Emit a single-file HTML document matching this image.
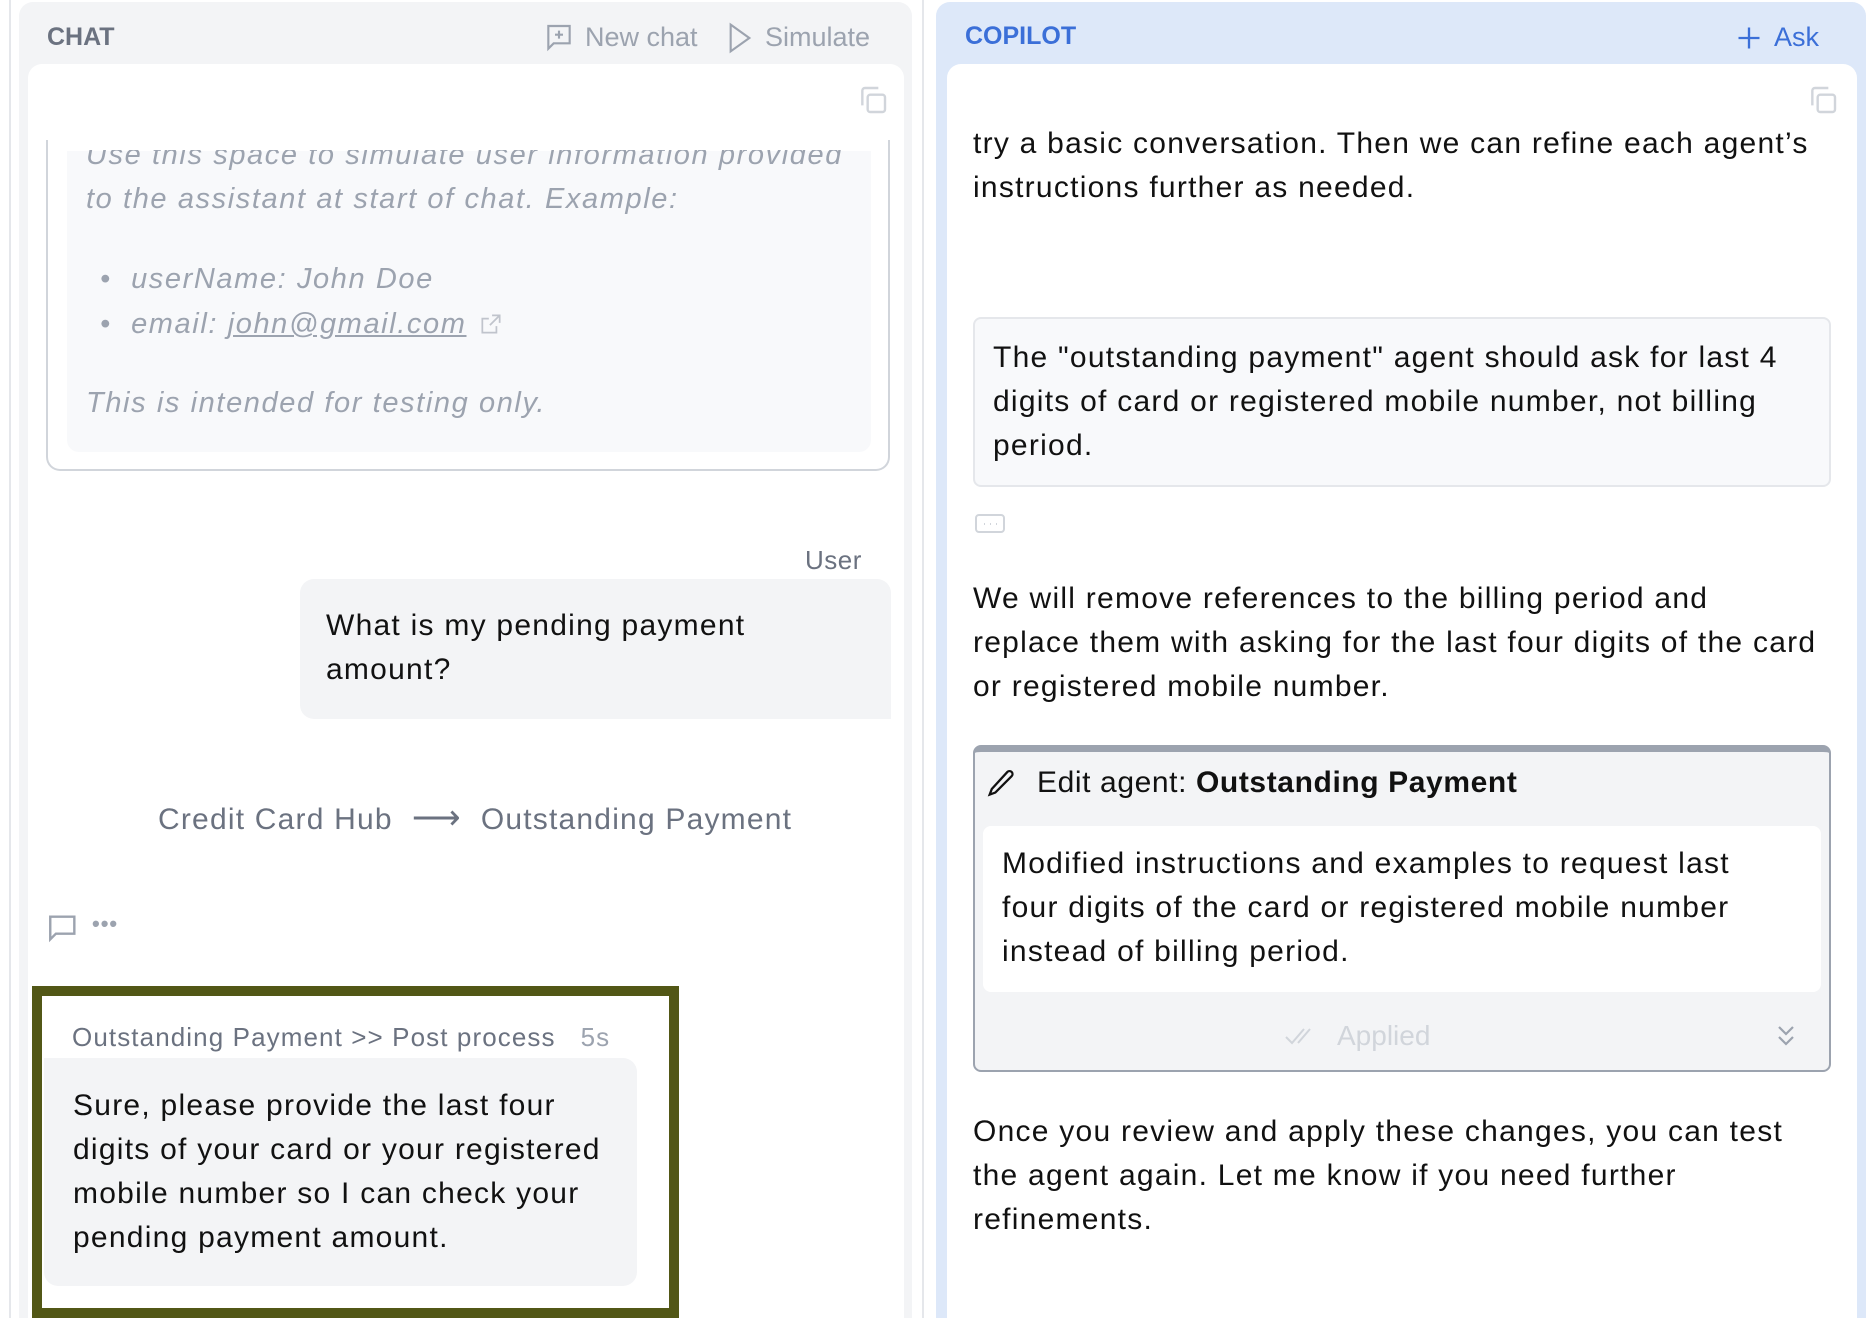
<!DOCTYPE html>
<html><head><meta charset="utf-8"><style>
*{margin:0;padding:0;box-sizing:border-box}
html,body{width:1874px;height:1318px;overflow:hidden}
body{background:#fff;font-family:"Liberation Sans",sans-serif;position:relative;color:#111}
.a{position:absolute;white-space:nowrap}
.t{font-size:30px;line-height:44px;letter-spacing:1.25px}
.g{color:#9ca3af;font-style:italic;font-size:29px;letter-spacing:1.6px}
</style></head><body>
<div class="a" style="left:9px;top:0;width:2px;height:1318px;background:#e5e7eb"></div>
<!-- left panel -->
<div class="a" style="left:19px;top:2px;width:893px;height:1316px;background:#f3f4f6;border-radius:14px 14px 0 0"></div>
<div class="a" style="left:922px;top:0;width:2px;height:1318px;background:#e5e7eb"></div>
<div class="a" style="left:47px;top:23px;font-size:25px;font-weight:bold;color:#6b7280">CHAT</div>
<svg class="a" style="left:543px;top:22px" width="32" height="32" viewBox="0 0 24 24" fill="none" stroke="#9ca3af" stroke-width="1.6"><path d="M4 3h16v13H8l-4 4z"/><path d="M12 6.5v6M9 9.5h6"/></svg>
<div class="a" style="left:585px;top:22px;font-size:27px;color:#9ca3af">New chat</div>
<svg class="a" style="left:726px;top:22px" width="28" height="32" viewBox="0 0 20 24" fill="none" stroke="#9ca3af" stroke-width="1.6"><path d="M3 2l14 10-14 10z"/></svg>
<div class="a" style="left:765px;top:22px;font-size:27px;color:#9ca3af">Simulate</div>
<div class="a" style="left:28px;top:64px;width:876px;height:1254px;background:#fff;border-radius:14px 14px 0 0"></div>
<svg class="a" style="left:857px;top:84px" width="32" height="32" viewBox="0 0 24 24" fill="none" stroke="#d1d5db" stroke-width="1.8"><rect x="8" y="8" width="13" height="13" rx="2"/><path d="M4 16V5a2 2 0 0 1 2-2h10"/></svg>
<!-- system box -->
<div class="a" style="left:46px;top:140px;width:844px;height:331px;border:2px solid #d1d5db;border-top:none;border-radius:0 0 14px 14px;overflow:hidden">
 <div style="position:absolute;left:19px;top:0;width:804px;height:312px;background:#f8f9fb;border-radius:0 0 12px 12px"></div>
</div>
<div class="a" style="left:66px;top:137px;width:810px;height:14px;background:#fff"></div>
<div class="a g" style="left:86px;top:133px;line-height:44px;clip-path:inset(17px 0 0 0)">Use this space to simulate user information provided</div>
<div class="a g" style="left:86px;top:177px;line-height:44px">to the assistant at start of chat. Example:</div>
<div class="a g" style="left:100px;top:257px;line-height:44px">•&nbsp;&nbsp;userName: John Doe</div>
<div class="a g" style="left:100px;top:302px;line-height:44px">•&nbsp;&nbsp;email: <span style="text-decoration:underline">john@gmail.com</span></div>
<svg class="a" style="left:478px;top:311px" width="26" height="26" viewBox="0 0 24 24" fill="none" stroke="#c0c4cc" stroke-width="1.6"><path d="M13 4h7v7M20 4l-9 9M17 14v6H4V7h6"/></svg>
<div class="a g" style="left:86px;top:381px;line-height:44px">This is intended for testing only.</div>
<!-- user -->
<div class="a" style="left:805px;top:545px;font-size:26px;color:#6b7280;letter-spacing:0.5px">User</div>
<div class="a" style="left:300px;top:579px;width:591px;height:140px;background:#f3f4f6;border-radius:14px 14px 0 14px"></div>
<div class="a t" style="left:326px;top:604px">What is my pending payment<br>amount?</div>
<div class="a" style="left:158px;top:798px;font-size:30px;color:#6b7280;letter-spacing:1.2px">Credit Card Hub&nbsp;&nbsp;<span style="font-size:34px">⟶</span>&nbsp;&nbsp;Outstanding Payment</div>
<svg class="a" style="left:46px;top:911px" width="34" height="34" viewBox="0 0 24 24" fill="none" stroke="#9ca3af" stroke-width="1.7"><path d="M3 4h17v12H7l-4 4z"/></svg>
<div class="a" style="left:92px;top:911px;font-size:22px;color:#9ca3af;letter-spacing:1px;font-weight:bold">•••</div>
<!-- highlighted -->
<div class="a" style="left:32px;top:986px;width:647px;height:332px;border:10px solid #525716;background:#fff"></div>
<div class="a" style="left:72px;top:1022px;font-size:26px;color:#6b7280;letter-spacing:1.1px">Outstanding Payment &gt;&gt; Post process&nbsp;&nbsp;&nbsp;<span style="color:#9ca3af">5s</span></div>
<div class="a" style="left:44px;top:1058px;width:593px;height:228px;background:#f3f4f6;border-radius:0 14px 14px 14px"></div>
<div class="a t" style="left:73px;top:1084px">Sure, please provide the last four<br>digits of your card or your registered<br>mobile number so I can check your<br>pending payment amount.</div>
<!-- right panel -->
<div class="a" style="left:936px;top:2px;width:930px;height:1316px;background:#dde8f9;border-radius:14px 14px 0 0"></div>
<div class="a" style="left:965px;top:22px;font-size:25px;font-weight:bold;color:#3b6fd8">COPILOT</div>
<svg class="a" style="left:1735px;top:24px" width="28" height="28" viewBox="0 0 24 24" fill="none" stroke="#3b6fd8" stroke-width="2"><path d="M12 3v18M3 12h18"/></svg>
<div class="a" style="left:1774px;top:22px;font-size:27px;color:#3b6fd8">Ask</div>
<div class="a" style="left:947px;top:64px;width:910px;height:1254px;background:#fff;border-radius:14px 14px 0 0"></div>
<svg class="a" style="left:1807px;top:84px" width="32" height="32" viewBox="0 0 24 24" fill="none" stroke="#d1d5db" stroke-width="1.8"><rect x="8" y="8" width="13" height="13" rx="2"/><path d="M4 16V5a2 2 0 0 1 2-2h10"/></svg>
<div class="a t" style="left:973px;top:122px;clip-path:inset(8px 0 0 0)">try a basic conversation. Then we can refine each agent’s<br>instructions further as needed.</div>
<div class="a" style="left:973px;top:317px;width:858px;height:170px;background:#f8f9fb;border:2px solid #e5e7eb;border-radius:8px"></div>
<div class="a t" style="left:993px;top:336px">The "outstanding payment" agent should ask for last 4<br>digits of card or registered mobile number, not billing<br>period.</div>
<svg class="a" style="left:974px;top:512px" width="32" height="24" viewBox="0 0 32 24" fill="none" stroke="#d1d5db" stroke-width="2"><rect x="2" y="3" width="28" height="17" rx="3"/><path d="M10 12h1M16 12h1M22 12h1"/></svg>
<div class="a t" style="left:973px;top:577px">We will remove references to the billing period and<br>replace them with asking for the last four digits of the card<br>or registered mobile number.</div>
<!-- edit card -->
<div class="a" style="left:973px;top:745px;width:858px;height:327px;background:#f3f4f6;border:2px solid #9ca3af;border-top:7px solid #9ca3af;border-radius:8px"></div>
<svg class="a" style="left:984px;top:766px" width="34" height="36" viewBox="0 0 24 24" fill="none" stroke="#111" stroke-width="1.6"><path d="M16.5 3.5a2.1 2.1 0 0 1 3 3L8 18l-4 1.5L5.5 15.5z"/></svg>
<div class="a" style="left:1037px;top:766px;font-size:30px;letter-spacing:0.6px">Edit agent: <b style="font-weight:600">Outstanding Payment</b></div>
<div class="a" style="left:983px;top:826px;width:838px;height:166px;background:#fff;border-radius:8px"></div>
<div class="a t" style="left:1002px;top:842px">Modified instructions and examples to request last<br>four digits of the card or registered mobile number<br>instead of billing period.</div>
<svg class="a" style="left:1284px;top:1024px" width="36" height="24" viewBox="0 0 36 24" fill="none" stroke="#d1d5db" stroke-width="2"><path d="M2 13l6 6L20 5M14 19L26 5"/></svg>
<div class="a" style="left:1337px;top:1020px;font-size:28px;color:#d1d5db">Applied</div>
<svg class="a" style="left:1774px;top:1022px" width="24" height="30" viewBox="0 0 24 30" fill="none" stroke="#9ca3af" stroke-width="2.2"><path d="M5 5l7 7 7-7M5 15l7 7 7-7"/></svg>
<div class="a t" style="left:973px;top:1110px">Once you review and apply these changes, you can test<br>the agent again. Let me know if you need further<br>refinements.</div>
</body></html>
